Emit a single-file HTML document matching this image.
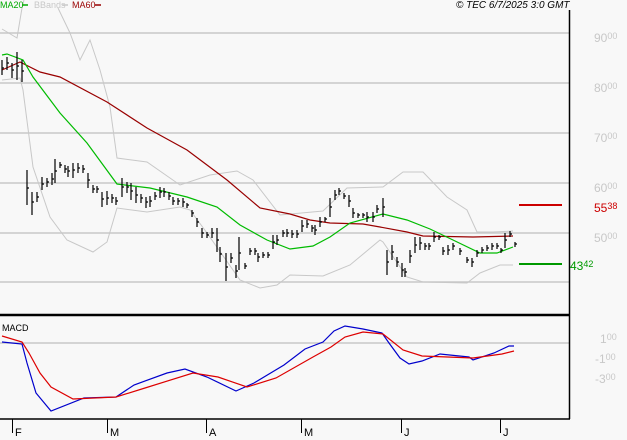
<!DOCTYPE html>
<html><head><meta charset="utf-8"><style>
html,body{margin:0;padding:0;background:#f8f8f8;}
body{width:627px;height:440px;position:relative;overflow:hidden;font-family:"Liberation Sans",sans-serif;}
.t{position:absolute;font-size:10px;line-height:10px;white-space:nowrap;}
.lg{position:absolute;font-size:9px;line-height:9px;white-space:nowrap;top:1px;}
.lab{position:absolute;color:#c8c8c8;font-size:12px;line-height:12px;white-space:nowrap;}
.lab sup{font-size:9px;vertical-align:top;line-height:9px;}
</style></head><body>
<svg width="627" height="440" style="position:absolute;left:0;top:0" xmlns="http://www.w3.org/2000/svg">
<g stroke="#c8c8c8" stroke-width="1.5" fill="none">
<line x1="0" y1="33" x2="569" y2="33"/><line x1="0" y1="83" x2="569" y2="83"/>
<line x1="0" y1="133" x2="569" y2="133"/><line x1="0" y1="183" x2="569" y2="183"/>
<line x1="0" y1="233" x2="569" y2="233"/><line x1="0" y1="282" x2="569" y2="282"/>
<line x1="0" y1="343" x2="569" y2="343"/>
</g>
<g stroke="#c8c8c8" stroke-width="1" fill="none">
<polyline points="2,29 17,38 22,8 24,0"/>
<polyline points="58,8 70,33 80,60 90,40 100,70 110,107 117,158 147,162 180,185 210,175 237,171 253,180 280,215 323,211 347,188 383,187 403,172 423,172 447,197 467,210 477,232 493,232 513,231"/>
<polyline points="2,80 20,78 23,90 33,167 50,217 67,240 93,252 107,242 117,208 147,212 180,207 190,210 207,233 240,280 260,288 277,285 290,275 323,276 350,265 380,240 383,242 407,277 423,282 467,283 480,273 500,265 513,265"/>
</g>
<polyline fill="none" stroke="#990000" stroke-width="1.2" points="2,70 20,62 40,72 60,77 107,102 147,128 187,150 227,180 260,208 290,214 310,220 330,223 363,224 380,227 407,232 423,236 473,237 513,236"/>
<polyline fill="none" stroke="#00bb00" stroke-width="1.2" points="2,55 7,54 23,60 33,77 60,113 87,143 117,184 150,188 187,197 217,207 240,225 267,240 290,249 313,246 330,237 350,223 383,214 407,220 430,229 453,240 480,253 497,253 513,247"/>
<path fill="none" stroke="#000" stroke-width="1.2" d="M2,60V75M2,68h2M7,57V70M7,63h2M12,63V78M12,70h2M17,52V80M17,66h2M22,60V82M22,71h2M27,170V205M27,188h2M32,192V215M32,202h2M37,192V202M37,197h2M42,177V190M42,184h2M47,178V187M47,182h2M52,173V185M52,179h2M55,159V183M55,171h2M60,162V168M60,165h2M65,165V173M65,169h2M68,166V177M68,171h2M73,163V178M73,170h2M78,163V173M78,168h2M83,165V173M83,169h2M88,173V188M88,180h2M93,185V193M93,189h2M97,186V193M97,189h2M102,192V207M102,199h2M107,191V205M107,198h2M112,194V203M112,198h2M116,197V205M116,201h2M122,178V197M122,187h2M127,182V193M127,187h2M131,183V200M131,191h2M136,187V203M136,195h2M141,194V203M141,198h2M146,197V208M146,202h2M150,196V207M150,201h2M155,192V200M155,196h2M160,187V198M160,192h2M164,188V197M164,192h2M169,192V200M169,196h2M173,197V205M173,201h2M178,198V205M178,201h2M183,198V207M183,202h2M187,203V208M187,205h2M192,210V217M192,213h2M197,218V227M197,222h2M202,228V238M202,233h2M207,232V238M207,235h2M212,228V238M212,233h2M217,228V252M217,240h2M220,247V262M220,254h2M226,253V281M226,267h2M231,253V263M231,258h2M236,265V278M236,271h2M239,237V270M239,253h2M245,263V269M245,266h2M250,248V255M250,251h2M255,248V255M255,251h2M258,253V262M258,257h2M263,252V258M263,255h2M268,252V258M268,255h2M273,235V249M273,242h2M277,235V245M277,240h2M283,230V237M283,233h2M287,229V237M287,233h2M292,230V238M292,234h2M297,230V238M297,234h2M302,220V232M302,226h2M307,220V228M307,224h2M312,225V232M312,228h2M315,225V235M315,230h2M320,217V227M320,222h2M325,217V222M325,219h2M330,198V217M330,207h2M335,190V200M335,195h2M339,188V195M339,191h2M344,193V199M344,196h2M349,195V207M349,201h2M353,208V218M353,213h2M358,213V218M358,215h2M363,213V218M363,215h2M367,212V222M367,217h2M373,212V222M373,217h2M377,205V213M377,209h2M383,198V217M383,207h2M387,250V275M387,262h2M392,245V260M392,252h2M397,257V267M397,262h2M402,263V277M402,270h2M405,268V277M405,272h2M410,250V263M410,256h2M415,237V253M415,245h2M420,237V250M420,243h2M425,243V250M425,246h2M429,243V250M429,246h2M434,232V242M434,237h2M439,235V240M439,237h2M443,247V255M443,251h2M448,245V255M448,250h2M453,243V250M453,246h2M460,248V255M460,251h2M467,257V263M467,260h2M472,258V267M472,262h2M477,250V257M477,253h2M482,247V253M482,250h2M487,245V251M487,248h2M492,243V250M492,246h2M497,243V249M497,246h2M501,248V253M501,250h2M505,233V248M505,240h2M510,231V237M510,234h2M515,242V247M515,244h2"/>
<line x1="519" y1="205" x2="562" y2="205" stroke="#cc0000" stroke-width="2"/>
<line x1="519" y1="264" x2="562" y2="264" stroke="#009900" stroke-width="2"/>
<polyline fill="none" stroke="#0000cc" stroke-width="1.2" points="2,342 22,344 27,363 36,393 51,411 84,398 116,397 134,385 167,373 185,369 207,377 236,391 254,383 284,365 305,349 323,342 334,331 345,326 363,329 382,333 389,343 400,358 409,364 422,361 440,354 469,357 473,360 494,353 509,346 514,346"/>
<polyline fill="none" stroke="#dd0000" stroke-width="1.2" points="2,336 22,342 29,353 40,373 51,387 73,399 116,397 145,388 193,373 218,377 247,387 276,378 313,357 331,347 345,337 363,332 383,334 403,350 422,356 473,358 502,354 514,351"/>
<g stroke="#000" fill="none">
<line x1="569.5" y1="10" x2="569.5" y2="419" stroke-width="1.5"/>
<line x1="0" y1="315" x2="569" y2="315" stroke-width="2.5"/>
<line x1="0" y1="419" x2="570" y2="419" stroke-width="1.5"/>
<line x1="12.5" y1="419" x2="12.5" y2="433"/><line x1="107.5" y1="419" x2="107.5" y2="433"/>
<line x1="206.5" y1="419" x2="206.5" y2="433"/><line x1="301.5" y1="419" x2="301.5" y2="433"/>
<line x1="401.5" y1="419" x2="401.5" y2="433"/><line x1="500.5" y1="419" x2="500.5" y2="433"/>
</g>
<g stroke-width="1.5">
<line x1="22" y1="5" x2="28" y2="5" stroke="#00aa00"/>
<line x1="62" y1="5" x2="68" y2="5" stroke="#c8c8c8"/>
<line x1="95" y1="5" x2="101" y2="5" stroke="#990000"/>
</g>
</svg>
<div class="lg" style="left:0;color:#00aa00">MA20</div>
<div class="lg" style="left:34px;color:#c8c8c8">BBands</div>
<div class="lg" style="left:72px;color:#990000">MA60</div>
<div class="t" style="left:456px;top:1px;color:#000;font-style:italic">© TEC 6/7/2025 3:0 GMT</div>
<div class="t" style="left:2px;top:323px;color:#000;font-size:9px">MACD</div>
<div class="lab" style="left:594px;top:32px">90<sup>00</sup></div>
<div class="lab" style="left:594px;top:82px">80<sup>00</sup></div>
<div class="lab" style="left:594px;top:132px">70<sup>00</sup></div>
<div class="lab" style="left:594px;top:182px">60<sup>00</sup></div>
<div class="lab" style="left:594px;top:232px">50<sup>00</sup></div>
<div class="lab" style="left:594px;top:202px;color:#cc0000">55<sup>38</sup></div>
<div class="lab" style="left:570px;top:260px;color:#009900">43<sup>42</sup></div>
<div class="lab" style="left:600px;top:333px">1<sup>00</sup></div>
<div class="lab" style="left:595px;top:353px">-1<sup>00</sup></div>
<div class="lab" style="left:595px;top:373px">-3<sup>00</sup></div>
<div class="t" style="left:15px;top:428px;font-size:11px">F</div>
<div class="t" style="left:110px;top:428px;font-size:11px">M</div>
<div class="t" style="left:209px;top:428px;font-size:11px">A</div>
<div class="t" style="left:304px;top:428px;font-size:11px">M</div>
<div class="t" style="left:404px;top:428px;font-size:11px">J</div>
<div class="t" style="left:503px;top:428px;font-size:11px">J</div>
</body></html>
